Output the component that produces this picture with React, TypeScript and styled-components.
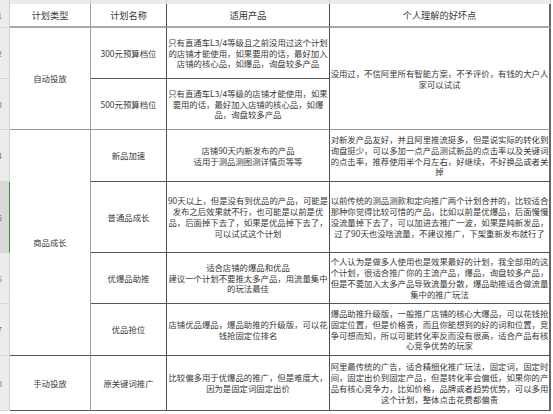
import React from 'react';
import styled, { createGlobalStyle } from 'styled-components';

const GlobalStyle = createGlobalStyle`
    html, body {
        margin: 0;
        padding: 0;
        background: #ffffff;
    }
`;

// Ширины колонок и высоты строк листа
const COLS = '10px 81px 76px 163px 221px';
const ROWS = '4px 24px 51px 51px 52px 71px 51px 52px 55px';

const Sheet = styled.div`
    width: 553px;
    height: 414px;
    overflow: hidden;
    display: grid;
    grid-template-columns: ${COLS};
    grid-template-rows: ${ROWS};
    align-content: start;
    font-family: "Noto Sans CJK SC", "Noto Sans", sans-serif;
    color: #383838;
`;

const ColHead = styled.div<{ $col: number }>`
    grid-row: 1;
    grid-column: ${p => p.$col};
    background: #ebebeb;
    border-right: 1px solid #cfcfcf;
    box-sizing: border-box;
`;

const RowHead = styled.div<{ $row: number; $active?: boolean }>`
    grid-row: ${p => p.$row};
    grid-column: 1;
    display: flex;
    align-items: center;
    justify-content: flex-end;
    padding-right: 7px;
    overflow: hidden;
    box-sizing: border-box;
    background: ${p => (p.$active ? '#d9d9d9' : '#ececec')};
    border-bottom: 1px solid #d6d6d6;
    border-right: 1px solid ${p => (p.$active ? '#3f8f3a' : '#d2d2d2')};
    font-size: 8px;
    color: #7a7a7a;
`;

type Edge = 'header' | 'soft' | 'dark';

const bottomEdge: Record<Edge, string> = {
    header: '2px solid #a8a8a8',
    soft: '1px solid #9a9a9a',
    dark: '1px solid #575757',
};

const rightEdge = (col: number) => {
    if (col === 2) return '1px solid #9c9c9c';
    if (col === 5) return '2px solid #666666';
    return '1px solid #4e4e4e';
};

const Cell = styled.div<{ $col: number; $row: number; $span: number; $edge: Edge; $head?: boolean }>`
    grid-column: ${p => p.$col};
    grid-row: ${p => p.$row} / span ${p => p.$span};
    display: flex;
    flex-direction: column;
    align-items: center;
    justify-content: center;
    box-sizing: border-box;
    border-right: ${p => rightEdge(p.$col)};
    border-bottom: ${p => bottomEdge[p.$edge]};
    overflow: hidden;
    font-size: ${p => (p.$head ? '9.2px' : '8.4px')};
    line-height: ${p => (p.$head ? '12px' : '10.8px')};
    text-align: center;
`;

const Line = styled.span`
    white-space: nowrap;
`;

interface CellData {
    col: number;
    row: number;
    span?: number;
    edge?: Edge;
    lines: string[];
}

const header = ['计划类型', '计划名称', '适用产品', '个人理解的好坏点'];

const cells: CellData[] = [
    // 自动投放
    { col: 2, row: 3, span: 2, edge: 'soft', lines: ['自动投放'] },
    { col: 3, row: 3, lines: ['300元预算档位'] },
    {
        col: 4, row: 3,
        lines: ['只有直通车L3/4等级且之前没用过这个计划', '的店铺才能使用，如果要用的话，最好加入', '店铺的核心品，如爆品，询盘较多产品'],
    },
    {
        col: 5, row: 3, span: 2, edge: 'soft',
        lines: ['没用过，不信阿里所有智能方案，不予评价，有钱的大户人', '家可以试试'],
    },
    { col: 3, row: 4, edge: 'soft', lines: ['500元预算档位'] },
    {
        col: 4, row: 4, edge: 'soft',
        lines: ['只有直通车L3/4等级的店铺才能使用，如果', '要用的话，最好加入店铺的核心品，如爆', '品，询盘较多产品'],
    },
    // 商品成长
    { col: 2, row: 5, span: 4, lines: ['商品成长'] },
    { col: 3, row: 5, lines: ['新品加速'] },
    { col: 4, row: 5, lines: ['店铺90天内新发布的产品', '适用于测品测图测详情页等等'] },
    {
        col: 5, row: 5,
        lines: [
            '对新发产品友好，并且阿里推流挺多，但是说实际的转化到',
            '询盘挺少，可以多加一点产品测试新品的点击率以及关键词',
            '的点击率，推荐使用半个月左右，好继续，不好换品或者关',
            '掉',
        ],
    },
    { col: 3, row: 6, lines: ['普通品成长'] },
    {
        col: 4, row: 6,
        lines: [
            '90天以上，但是没有到优品的产品，可能是',
            '发布之后效果就不行，也可能是以前是优',
            '品，后面掉下去了，如果是优品掉下去了，',
            '可以试试这个计划',
        ],
    },
    {
        col: 5, row: 6,
        lines: [
            '以前传统的测品测款和定向推广两个计划合并的，比较适合',
            '那种你觉得比较可惜的产品，比如以前是优爆品，后面慢慢',
            '没流量掉下去了，可以加进去推广一波，如果是纯新发品，',
            '过了90天也没啥流量，不建议推广，下架重新发布就行了',
        ],
    },
    { col: 3, row: 7, lines: ['优爆品助推'] },
    {
        col: 4, row: 7,
        lines: ['适合店铺的爆品和优品', '建议一个计划不要推太多产品，用流量集中', '的玩法最佳'],
    },
    {
        col: 5, row: 7,
        lines: [
            '个人认为是做多人使用也是效果最好的计划，我全部用的这',
            '个计划，很适合推广你的主流产品，爆品，询盘较多产品，',
            '但是不要加入太多产品导致流量分散，爆品助推适合做流量',
            '集中的推广玩法',
        ],
    },
    { col: 3, row: 8, lines: ['优品抢位'] },
    { col: 4, row: 8, lines: ['店铺优品爆品，爆品助推的升级版，可以花', '钱抢固定位排名'] },
    {
        col: 5, row: 8,
        lines: [
            '爆品助推升级版，一般推广店铺的核心大爆品，可以花钱抢',
            '固定位置，但是价格贵，而且你能想到的好的词和位置，竞',
            '争可想而知，所以可能转化率反而没有很高，适合产品有核',
            '心竞争优势的玩家',
        ],
    },
    // 手动投放
    { col: 2, row: 9, lines: ['手动投放'] },
    { col: 3, row: 9, lines: ['原关键词推广'] },
    { col: 4, row: 9, lines: ['比较偏多用于优爆品的推广，但是难度大，', '因为是固定词固定出价'] },
    {
        col: 5, row: 9,
        lines: [
            '阿里最传统的广告，适合精细化推广玩法，固定词，固定时',
            '间，固定出价到固定产品，但是转化率会偏低，如果你的产',
            '品有核心竞争力，比如价格，品牌或者趋势优势，可以多用',
            '这个计划，整体点击花费都偏贵',
        ],
    },
];

const gutterRows = [2, 3, 4, 5, 6, 7, 8, 9];

export default function App() {
    return (
        <>
            <GlobalStyle />
            <Sheet>
                {[1, 2, 3, 4, 5].map(c => (
                    <ColHead key={c} $col={c} />
                ))}
                {gutterRows.map((r, i) => (
                    <RowHead key={r} $row={r} $active={r === 6}>
                        {i + 1}
                    </RowHead>
                ))}
                {header.map((h, i) => (
                    <Cell key={h} $col={i + 2} $row={2} $span={1} $edge="header" $head>
                        <Line>{h}</Line>
                    </Cell>
                ))}
                {cells.map(c => (
                    <Cell
                        key={`${c.col}-${c.row}`}
                        $col={c.col}
                        $row={c.row}
                        $span={c.span ?? 1}
                        $edge={c.edge ?? 'dark'}
                    >
                        {c.lines.map((l, i) => (
                            <Line key={i}>{l}</Line>
                        ))}
                    </Cell>
                ))}
            </Sheet>
        </>
    );
}
